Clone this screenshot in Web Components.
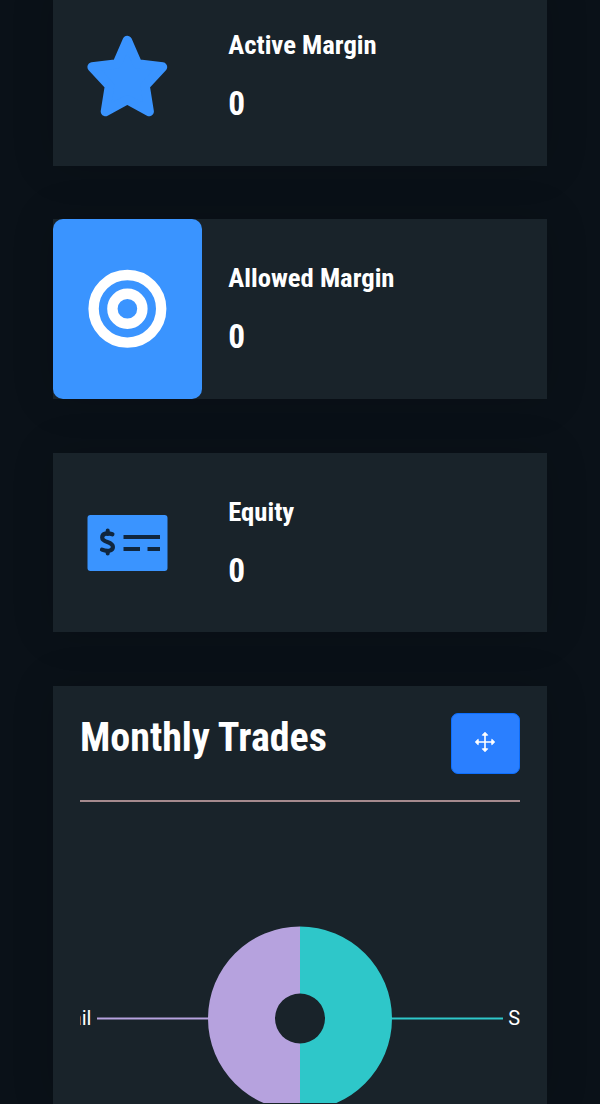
<!DOCTYPE html>
<html lang="en">
<head>
<meta charset="utf-8">
<title>Dashboard</title>
<style>
  body {
    margin: 0;
    height: 1104px;
    overflow: hidden;
    background: #0a1118;
    color: #fff;
    font-family: "Roboto Condensed", Roboto, "Liberation Sans", sans-serif;
  }
</style>
</head>
<body>
<dash-board>
  <stat-card label="Active Margin" value="0">
    <svg slot="icon" width="82" height="82" viewBox="0 0 82 82">
      <path d="M41.3 5.5 51.5 28.8 76.5 32 59.1 50.8 63.2 76.5 41.3 64.7 19.4 76.5 23.5 50.8 6.1 32 31.1 28.8Z" fill="#3a94ff" stroke="#3a94ff" stroke-width="9.4" stroke-linejoin="round"/>
    </svg>
  </stat-card>
  <stat-card label="Allowed Margin" value="0" active>
    <svg slot="icon" width="80" height="80" viewBox="0 0 80 80" fill="none" stroke="#fff" stroke-width="10.4">
      <circle cx="40.4" cy="39.8" r="33.8"/>
      <circle cx="40.4" cy="39.8" r="15"/>
    </svg>
  </stat-card>
  <stat-card label="Equity" value="0">
    <svg slot="icon" width="81" height="56" viewBox="0 0 81 56">
      <rect x=".5" width="80" height="56" rx="3" fill="#3a94ff"/>
      <g fill="none" stroke="#10263e">
        <path d="M25.4 19.3C20.4 17.5 15.2 18.3 15.2 22.4C15.2 28.3 25.9 25.6 25.9 32C25.9 36.3 19.9 36.8 15 34.6" stroke-width="4.2" stroke-linecap="round"/>
        <path d="M20.7 15.6V19M20.7 36V38.6" stroke-width="4" stroke-linecap="round"/>
        <path d="M36.5 22H73M36.5 34H53M60.5 34H73" stroke-width="4.2"/>
      </g>
    </svg>
  </stat-card>
  <chart-panel heading="Monthly Trades">
    <pie-chart></pie-chart>
  </chart-panel>
</dash-board>

<script>
class DashBoard extends HTMLElement {
  constructor() {
    super();
    this.attachShadow({ mode: 'open' }).innerHTML = `
      <style>
        :host {
          display: flex;
          flex-direction: column;
          gap: 53.4px;
          margin: -14px 53.3px 0;
        }
      </style>
      <slot></slot>
    `;
  }
}

class StatCard extends HTMLElement {
  constructor() {
    super();
    this.attachShadow({ mode: 'open' }).innerHTML = `
      <style>
        :host {
          display: flex;
          height: 179.9px;
          background: #19232a;
          box-shadow: 0 0 40px rgba(0, 0, 0, .16);
        }
        .icon {
          display: flex;
          align-items: center;
          justify-content: center;
          width: 148.4px;
          border-radius: 10px;
        }
        :host([active]) .icon {
          background: #3a94ff;
        }
        .text {
          display: flex;
          flex-direction: column;
          gap: 23px;
          padding: 43px 0 0 26.6px;
          font-weight: 700;
          font-stretch: 75%;
          white-space: nowrap;
        }
        .label {
          font-size: 26.67px;
          line-height: 32px;
        }
        .value {
          font-size: 33.3px;
          line-height: 40px;
        }
      </style>
      <div class="icon"><slot name="icon"></slot></div>
      <div class="text">
        <div class="label"></div>
        <div class="value"></div>
      </div>
    `;
  }

  connectedCallback() {
    this.shadowRoot.querySelector('.label').textContent = this.getAttribute('label');
    this.shadowRoot.querySelector('.value').textContent = this.getAttribute('value');
  }
}

class ChartPanel extends HTMLElement {
  constructor() {
    super();
    this.attachShadow({ mode: 'open' }).innerHTML = `
      <style>
        :host {
          display: block;
          box-sizing: border-box;
          height: 418px;
          padding: 26.7px 26.7px 0;
          background: #19232a;
          box-shadow: 0 0 40px rgba(0, 0, 0, .16);
        }
        header {
          display: flex;
          justify-content: space-between;
          height: 87.4px;
          border-bottom: 2px solid #a58a8e;
        }
        h2 {
          margin: 0;
          font-size: 40px;
          line-height: 49px;
          font-weight: 700;
          font-stretch: 75%;
          white-space: nowrap;
        }
        button {
          display: flex;
          align-items: center;
          justify-content: center;
          width: 69.4px;
          height: 61px;
          padding: 0 0 3px;
          border: 1.4px solid #0d6efd;
          border-radius: 7px;
          background: #2a7fff;
        }
      </style>
      <header>
        <h2></h2>
        <button aria-label="Move">
          <svg width="22" height="22" viewBox="0 0 22 22" fill="#fff" stroke="#fff" stroke-linejoin="round">
            <path d="M11 2V20M2 11H20" stroke-width="1.6"/>
            <path d="M11 1.3 13.7 4.2H8.3ZM11 20.7 13.7 17.8H8.3ZM1.3 11 4.2 8.3V13.7ZM20.7 11 17.8 8.3V13.7Z" stroke-width="1"/>
          </svg>
        </button>
      </header>
      <slot></slot>
    `;
  }

  connectedCallback() {
    this.shadowRoot.querySelector('h2').textContent = this.getAttribute('heading');
  }
}

class PieChart extends HTMLElement {
  constructor() {
    super();
    this.attachShadow({ mode: 'open' }).innerHTML = `
      <style>
        :host {
          display: block;
        }
        svg {
          display: block;
          overflow: hidden;
        }
        text {
          font: 20px Roboto, sans-serif;
          fill: #fff;
        }
      </style>
      <svg width="440" height="301" viewBox="0 0 440 301">
        <path d="M220 124.5A92 92 0 0 0 220 308.5V241.5A25 25 0 0 1 220 191.5Z" fill="#b6a2de"/>
        <path d="M220 124.5A92 92 0 0 1 220 308.5V241.5A25 25 0 0 0 220 191.5Z" fill="#2ec7c9"/>
        <path d="M17 216.5H128.5" stroke="#b6a2de" stroke-width="1.8"/>
        <path d="M311.5 216.5H423" stroke="#2ec7c9" stroke-width="1.8"/>
        <text x="11.4" y="222.5" text-anchor="end">ail</text>
        <text x="428.2" y="222.5">S</text>
      </svg>
    `;
  }
}

customElements.define('dash-board', DashBoard);
customElements.define('stat-card', StatCard);
customElements.define('chart-panel', ChartPanel);
customElements.define('pie-chart', PieChart);
</script>
</body>
</html>
